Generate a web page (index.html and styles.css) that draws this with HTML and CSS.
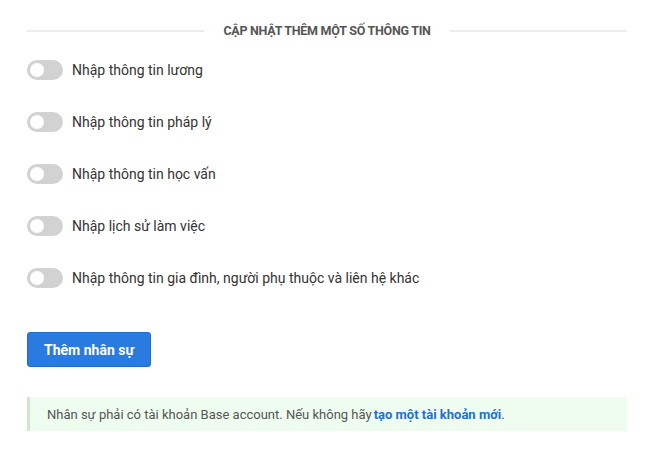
FILE: index.html
```html
<!DOCTYPE html>
<html lang="vi">
<head>
<meta charset="utf-8">
<link rel="stylesheet" href="styles.css">
</head>
<body>
<div class="page">
  <div class="divider">
    <span class="line"></span>
    <span class="divider-title">CẬP NHẬT THÊM MỘT SỐ THÔNG TIN</span>
    <span class="line"></span>
  </div>
  <ul class="options">
    <li class="option"><span class="toggle"><span class="knob"></span></span><span class="label">Nhập thông tin lương</span></li>
    <li class="option"><span class="toggle"><span class="knob"></span></span><span class="label">Nhập thông tin pháp lý</span></li>
    <li class="option"><span class="toggle"><span class="knob"></span></span><span class="label">Nhập thông tin học vấn</span></li>
    <li class="option"><span class="toggle"><span class="knob"></span></span><span class="label">Nhập lịch sử làm việc</span></li>
    <li class="option"><span class="toggle"><span class="knob"></span></span><span class="label">Nhập thông tin gia đình, người phụ thuộc và liên hệ khác</span></li>
  </ul>
  <button class="btn-primary">Thêm nhân sự</button>
  <div class="notice">Nhân sự phải có tài khoản Base account. Nếu không hãy <a class="notice-link" href="#">tạo một tài khoản mới</a>.</div>
</div>
</body>
</html>
```
FILE: styles.css
```css
* { box-sizing: border-box; }
html, body { margin: 0; padding: 0; background: #fff; }
body { font-family: Roboto, "Noto Sans", sans-serif; color: #333; }
.page { padding: 20px 29px 0 27px; width: 656px; }
.divider { display: flex; align-items: center; gap: 19px; height: 20px; }
.line { flex: 1; height: 2px; background: #ececec; margin-top: 2px; }
.divider-title { font-size: 12.5px; font-weight: 700; color: #555; letter-spacing: -0.27px; }
.options { list-style: none; margin: 20px 0 0; padding: 0; display: flex; flex-direction: column; gap: 32px; }
.option { display: flex; align-items: center; height: 20px; gap: 9px; }
.toggle { width: 36px; height: 20px; border-radius: 10px; background: #d2d2d2; display: flex; align-items: center; padding: 0 3px; }
.knob { width: 14px; height: 14px; border-radius: 50%; background: #fff; }
.label { font-size: 14px; color: #333; }
.btn-primary { margin-top: 44px; height: 35px; width: 124px; background: #2a7be0; color: #fff; border: 1px solid #1f6cc9; border-radius: 3px; font-family: Roboto, sans-serif; font-size: 14px; font-weight: 700; padding: 0; display: block; }
.notice { margin-top: 30px; background: #effdf1; border-left: 3px solid #cfe6d2; height: 34px; display: flex; align-items: center; padding-left: 17px; font-size: 13px; color: #555; }
.notice-link { color: #2270d0; font-weight: 700; text-decoration: none; margin-left: 2px; }
```
